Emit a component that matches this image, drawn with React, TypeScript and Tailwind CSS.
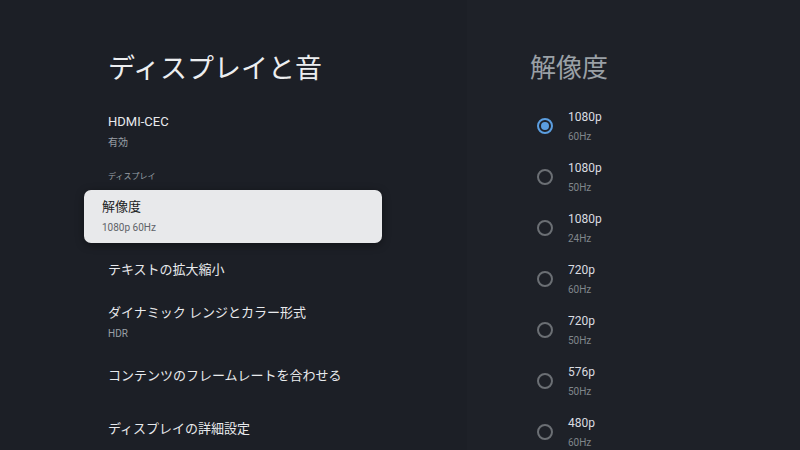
const font = { fontFamily: 'Roboto, "Noto Sans CJK JP", sans-serif' }

const resolutions = [
  { res: "1080p", hz: "60Hz", selected: true },
  { res: "1080p", hz: "50Hz" },
  { res: "1080p", hz: "24Hz" },
  { res: "720p", hz: "60Hz" },
  { res: "720p", hz: "50Hz" },
  { res: "576p", hz: "50Hz" },
  { res: "480p", hz: "60Hz" },
]

function Row({ title, sub }: { title: string; sub?: string }) {
  return (
    <div className="flex h-[53px] flex-col justify-center px-[24px]">
      <p className="text-[13px] leading-[18px] text-[#e8eaed]">{title}</p>
      {sub && <p className="mt-[5px] text-[10px] leading-[14px] text-[#9aa0a6]">{sub}</p>}
    </div>
  )
}

export default function App() {
  return (
    <div className="flex h-[450px] w-[800px] overflow-hidden bg-[#1e2128]" style={font}>
      <section className="w-[467px] bg-[#1c1f26] pl-[84px]">
        <h1 className="flex h-[105px] items-end pb-[16px] pl-[24px] text-[27px] leading-[40px] font-normal text-[#eceef0]">
          ディスプレイと音
        </h1>
        <Row title="HDMI-CEC" sub="有効" />
        <div className="flex h-[32px] items-end pb-[7px] pl-[24px] text-[8px] text-[#9aa0a6]">ディスプレイ</div>
        <div className="mr-[85px] flex h-[53px] flex-col justify-center rounded-[7px] bg-[#e8e9eb] px-[18px] shadow-[0_2px_8px_rgba(0,0,0,0.4)]">
          <p className="text-[13px] leading-[18px] text-[#202124]">解像度</p>
          <p className="mt-[5px] text-[10px] leading-[14px] text-[#5f6368]">1080p 60Hz</p>
        </div>
        <Row title="テキストの拡大縮小" />
        <Row title="ダイナミック レンジとカラー形式" sub="HDR" />
        <Row title="コンテンツのフレームレートを合わせる" />
        <Row title="ディスプレイの詳細設定" />
      </section>
      <section className="flex-1 pl-[70px]">
        <h2 className="flex h-[100px] items-end pb-[14px] -ml-[7px] text-[26px] leading-[36px] font-normal text-[#9aa0a6]">解像度</h2>
        {resolutions.map((r, i) => (
          <div className="flex h-[51px] items-center" key={i}>
            <span
              className={
                r.selected
                  ? "flex h-[16px] w-[16px] items-center justify-center rounded-full border-2 border-[#5b9ee0]"
                  : "flex h-[16px] w-[16px] items-center justify-center rounded-full border-2 border-[#6b6f74]"
              }
            >
              {r.selected && <span className="h-[8px] w-[8px] rounded-full bg-[#5b9ee0]" />}
            </span>
            <div className="ml-[15px] flex flex-col">
              <p className="text-[12px] leading-[17px] text-[#dadce0]">{r.res}</p>
              <p className="mt-[4px] text-[10px] leading-[13px] text-[#80868b]">{r.hz}</p>
            </div>
          </div>
        ))}
      </section>
    </div>
  )
}
